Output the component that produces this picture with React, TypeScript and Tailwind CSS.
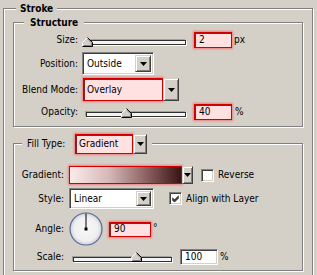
import React from "react";

const sunken =
  "border border-t-[#808080] border-l-[#808080] border-b-white border-r-white shadow-[inset_1px_1px_0_#404040,inset_-1px_-1px_0_#d4d0c8]";
const red =
  "border border-[#d00000] bg-[#ffe1e1] shadow-[0_0_2px_1px_rgba(255,90,90,0.7),inset_1px_1px_0_#8a2020]";

function Thumb() {
  return (
    <svg width="11" height="10" viewBox="0 0 11 10" className="block">
      <polygon points="5.5,0.5 10.5,5.5 10.5,9.5 0.5,9.5 0.5,5.5" fill="#d4d0c8" />
      <polyline points="0.5,9 0.5,5.5 5.5,0.5" stroke="#ffffff" fill="none" />
      <polyline points="5.5,0.5 10.5,5.5 10.5,9.5 0.5,9.5" stroke="#000000" fill="none" />
      <polyline points="5.5,1.8 9.5,5.8 9.5,8.5 1.5,8.5" stroke="#808080" fill="none" />
    </svg>
  );
}

function Arrow() {
  return (
    <svg width="7" height="4" viewBox="0 0 7 4" className="block">
      <polygon points="0,0 7,0 3.5,4" fill="#000" />
    </svg>
  );
}

function ArrowButton({ className }: { className: string }) {
  return (
    <div
      className={`flex items-center justify-center bg-[#d4d0c8] border border-t-[#d4d0c8] border-l-[#d4d0c8] border-b-[#404040] border-r-[#404040] shadow-[inset_1px_1px_0_#fff,inset_-1px_-1px_0_#808080] ${className}`}
    >
      <Arrow />
    </div>
  );
}

function Check({ checked }: { checked?: boolean }) {
  return (
    <div className={`w-[13px] h-[13px] bg-white shrink-0 flex items-center justify-center ${sunken}`}>
      {checked && (
        <svg width="7" height="7" viewBox="0 0 7 7" className="block">
          <path d="M0 2.5 L2.5 5 L7 0.5 M0 3.5 L2.5 6 L7 1.5 M0 4.5 L2.5 7 L7 2.5" stroke="#000" strokeWidth="1" fill="none" />
        </svg>
      )}
    </div>
  );
}

function Dial() {
  return (
    <svg width="34" height="34" viewBox="0 0 34 34" className="block shrink-0">
      <defs>
        <radialGradient id="dg" cx="50%" cy="50%" r="50%">
          <stop offset="0%" stopColor="#f7f7f7" />
          <stop offset="75%" stopColor="#f0f0f0" />
          <stop offset="100%" stopColor="#c9ced9" />
        </radialGradient>
      </defs>
      <circle cx="17" cy="17" r="16" fill="url(#dg)" stroke="#5a6b96" strokeWidth="1.2" />
      <line x1="17" y1="17" x2="17" y2="1.5" stroke="#000" strokeWidth="1" />
      <rect x="15.5" y="15.5" width="3" height="3" fill="#000" />
    </svg>
  );
}

function Slider({ outer, track, thumbLeft, top }: { outer: string; track: string; thumbLeft: number; top: string }) {
  return (
    <div className={`relative shrink-0 h-full ${outer}`}>
      <div
        className={`h-[5px] bg-[#f4f4f4] border border-[#303030] shadow-[-1px_-1px_0_#a0a0a0,1px_1px_0_#ffffff] ${track}`}
      />
      <div className={`absolute ${top}`} style={{ left: thumbLeft }}>
        <Thumb />
      </div>
    </div>
  );
}

function Label({ children, w }: { children: React.ReactNode; w: string }) {
  return <span className={`${w} text-right shrink-0 whitespace-nowrap`}>{children}</span>;
}

export default function App() {
  return (
    <div className="w-[317px] h-[275px] overflow-hidden bg-[#d4d0c8] text-black text-[10px] leading-[14px] font-['DejaVu_Sans_Condensed','DejaVu_Sans',sans-serif] font-stretch-condensed">
      <div className="ml-[3px] mt-[8px] w-[310px] h-[300px] border border-[#808080] shadow-[inset_1px_1px_0_#fff,1px_1px_0_#fff]">
        <div className="-mt-[7px] ml-[12px] px-[4px] w-fit h-[14px] bg-[#d4d0c8] font-bold">Stroke</div>

        {/* Structure */}
        <div className="mt-[6px] ml-[9px] w-[290px] h-[105px] border border-[#808080] shadow-[inset_1px_1px_0_#fff,1px_1px_0_#fff]">
          <div className="-mt-[7px] ml-[10px] px-[6px] w-fit h-[14px] bg-[#d4d0c8] font-bold">Structure</div>

          <div className="mt-[1px] h-[18px] flex items-center">
            <Label w="w-[64px]">Size:</Label>
            <Slider outer="ml-[4px] w-[104px]" track="ml-[4px] w-[100px] mt-[9px]" thumbLeft={0} top="top-[6px]" />
            <div className={`ml-[8px] w-[38px] h-[16px] pl-[4px] flex items-center ${red}`}>2</div>
            <span className="ml-[2px]">px</span>
          </div>

          <div className="mt-[3px] h-[23px] flex items-center">
            <Label w="w-[64px]">Position:</Label>
            <div className={`ml-[4px] w-[72px] h-[23px] bg-white flex items-center p-[2px] ${sunken}`}>
              <span className="flex-1 pl-[2px]">Outside</span>
              <ArrowButton className="w-[16px] h-full" />
            </div>
          </div>

          <div className="mt-[3px] h-[23px] flex items-center">
            <Label w="w-[64px]">Blend Mode:</Label>
            <div className="ml-[5px] w-[96px] h-[23px] flex">
              <div className={`flex-1 h-full flex items-center pl-[3px] ${red}`}>Overlay</div>
              <ArrowButton className="w-[16px] h-full" />
            </div>
          </div>

          <div className="mt-[3px] h-[16px] flex items-center">
            <Label w="w-[64px]">Opacity:</Label>
            <Slider outer="ml-[4px] w-[104px]" track="ml-[4px] w-[100px] mt-[8px]" thumbLeft={39} top="top-[4px]" />
            <div className={`ml-[8px] w-[38px] h-[16px] pl-[4px] flex items-center ${red}`}>40</div>
            <span className="ml-[3px]">%</span>
          </div>
        </div>

        {/* Fill */}
        <div className="mt-[16px] ml-[9px] w-[290px] h-[128px] border border-[#808080] shadow-[inset_1px_1px_0_#fff,1px_1px_0_#fff]">
          <div className="-mt-[10px] ml-[8px] px-[5px] w-fit h-[20px] bg-[#d4d0c8] flex items-center">
            <span className="w-[48px] whitespace-nowrap">Fill Type:</span>
            <div className="w-[72px] h-[20px] flex">
              <div className={`flex-1 h-full flex items-center pl-[3px] ${red}`}>Gradient</div>
              <ArrowButton className="w-[14px] h-full" />
            </div>
          </div>

          <div className="mt-[12px] h-[18px] flex items-center">
            <Label w="w-[50px]">Gradient:</Label>
            <div className="ml-[5px] h-[18px] flex">
              <div className="w-[113px] h-full border border-[#d00000] shadow-[0_0_2px_1px_rgba(255,90,90,0.7)] bg-[linear-gradient(to_right,#fcebeb,#d6b8b8_35%,#8a5e5e_70%,#3a1414)]" />
              <ArrowButton className="w-[11px] h-full" />
            </div>
            <div className="ml-[8px]">
              <Check />
            </div>
            <span className="ml-[4px]">Reverse</span>
          </div>

          <div className="mt-[4px] h-[21px] flex items-center">
            <Label w="w-[50px]">Style:</Label>
            <div className={`ml-[5px] w-[85px] h-[21px] bg-white flex items-center p-[2px] ${sunken}`}>
              <span className="flex-1 pl-[2px]">Linear</span>
              <ArrowButton className="w-[15px] h-full" />
            </div>
            <div className="ml-[15px]">
              <Check checked />
            </div>
            <span className="ml-[4px] whitespace-nowrap">Align with Layer</span>
          </div>

          <div className="mt-[3px] h-[34px] flex items-center">
            <Label w="w-[50px]">Angle:</Label>
            <div className="ml-[5px]">
              <Dial />
            </div>
            <div className={`ml-[6px] w-[42px] h-[15px] pl-[4px] flex items-center ${red}`}>90</div>
            <span className="ml-[2px] -mt-[3px]">°</span>
          </div>

          <div className="mt-[3px] h-[16px] flex items-center">
            <Label w="w-[50px]">Scale:</Label>
            <Slider outer="ml-[5px] w-[103px]" track="ml-[4px] w-[99px] mt-[8px]" thumbLeft={62} top="top-[3px]" />
            <div className={`ml-[8px] w-[38px] h-[16px] pl-[4px] bg-white flex items-center ${sunken}`}>100</div>
            <span className="ml-[2px]">%</span>
          </div>
        </div>
      </div>
    </div>
  );
}
